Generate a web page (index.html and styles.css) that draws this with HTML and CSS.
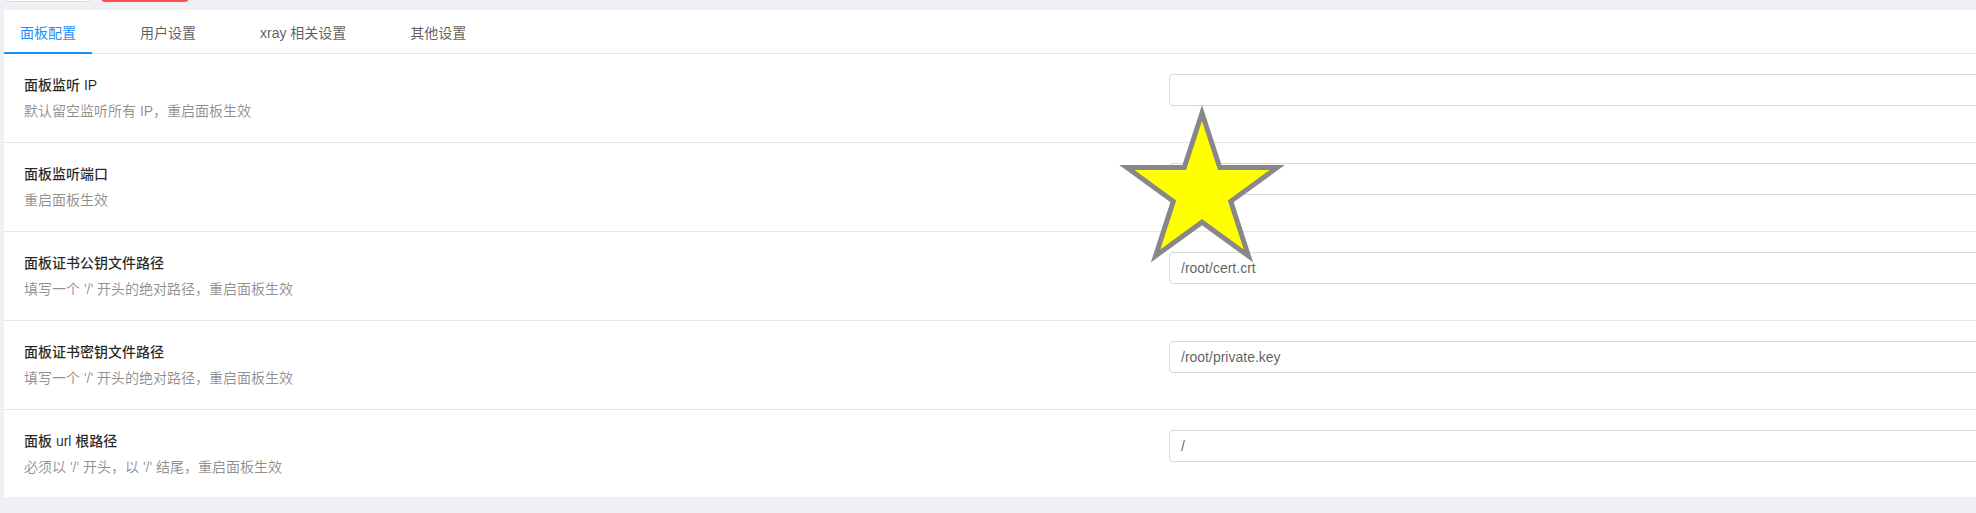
FILE: index.html
```html
<!DOCTYPE html>
<html lang="zh-CN">
<head>
<meta charset="utf-8">
<title>面板设置</title>
<link rel="stylesheet" href="styles.css">
</head>
<body>
<div class="page">
  <div class="toolbar">
    <button class="btn btn-default" aria-label="保存配置"></button>
    <button class="btn btn-danger" aria-label="重启面板"></button>
  </div>
  <div class="card">
    <div class="tabs">
      <div class="tab active">面板配置</div>
      <div class="tab">用户设置</div>
      <div class="tab">xray 相关设置</div>
      <div class="tab">其他设置</div>
    </div>
    <div class="list">
      <div class="item">
        <div class="meta">
          <div class="title">面板监听 IP</div>
          <div class="desc">默认留空监听所有 IP，重启面板生效</div>
        </div>
        <div class="field"><div class="input"></div></div>
      </div>
      <div class="item">
        <div class="meta">
          <div class="title">面板监听端口</div>
          <div class="desc">重启面板生效</div>
        </div>
        <div class="field"><div class="input"></div></div>
      </div>
      <div class="item">
        <div class="meta">
          <div class="title">面板证书公钥文件路径</div>
          <div class="desc">填写一个 '/' 开头的绝对路径，重启面板生效</div>
        </div>
        <div class="field"><div class="input">/root/cert.crt</div></div>
      </div>
      <div class="item">
        <div class="meta">
          <div class="title">面板证书密钥文件路径</div>
          <div class="desc">填写一个 '/' 开头的绝对路径，重启面板生效</div>
        </div>
        <div class="field"><div class="input">/root/private.key</div></div>
      </div>
      <div class="item">
        <div class="meta">
          <div class="title">面板 url 根路径</div>
          <div class="desc">必须以 '/' 开头，以 '/' 结尾，重启面板生效</div>
        </div>
        <div class="field"><div class="input">/</div></div>
      </div>
    </div>
  </div>
  <svg class="star" width="200" height="200" viewBox="-100 -100 200 200" aria-hidden="true">
    <polygon points="0,-79 17.75,-24.43 75.13,-24.41 28.72,9.33 46.44,63.91 0,30.2 -46.44,63.91 -28.72,9.33 -75.13,-24.41 -17.75,-24.43" />
  </svg>
</div>
</body>
</html>
```

FILE: styles.css
```css
html, body {
  margin: 0;
  padding: 0;
  overflow: hidden;
}
body {
  background: #eff0f4;
  font-family: "Liberation Sans", "Noto Sans CJK SC", sans-serif;
  font-size: 14px;
  color: rgba(0, 0, 0, 0.65);
}
.page {
  position: relative;
  display: flow-root;
  padding: 0 0 0 4px;
  height: 513px;
}
.toolbar {
  display: flex;
  gap: 10px;
  margin-top: -30px;
  padding-left: 1px;
  height: 32px;
}
.btn {
  height: 32px;
  border-radius: 4px;
  padding: 0;
}
.btn-default {
  width: 86px;
  background: #fff;
  border: 1px solid #d9d9d9;
}
.btn-danger {
  width: 88px;
  background: #ff4d4f;
  border: 1px solid #ff4d4f;
}
.card {
  margin-top: 8px;
  width: 2330px;
  background: #fff;
}
.tabs {
  display: flex;
  border-bottom: 1px solid #e8e8e8;
  height: 43px;
}
.tab {
  position: relative;
  padding: 12px 16px 9px;
  margin-right: 32px;
  line-height: 22px;
  color: rgba(0, 0, 0, 0.65);
  font-size: 14px;
}
.tab.active {
  color: #1890ff;
}
.tab.active::after {
  content: "";
  position: absolute;
  left: 0;
  right: 0;
  bottom: -1px;
  height: 2px;
  background: #1890ff;
}
.item {
  display: grid;
  grid-template-columns: 1fr 1fr;
  align-items: start;
  padding: 20px;
  border-bottom: 1px solid #e8e8e8;
}
.item:last-child {
  border-bottom: none;
  padding-bottom: 19px;
}
.title {
  line-height: 22px;
  margin-bottom: 4px;
  color: rgba(0, 0, 0, 0.85);
  font-weight: 500;
}
.desc {
  line-height: 22px;
  color: rgba(0, 0, 0, 0.45);
}
.input {
  box-sizing: border-box;
  height: 32px;
  padding: 4px 11px;
  line-height: 22px;
  border: 1px solid #d9d9d9;
  border-radius: 4px;
  color: rgba(0, 0, 0, 0.65);
  background: #fff;
}
.star {
  position: absolute;
  left: 1102px;
  top: 92px;
}
.star polygon {
  fill: #ffff00;
  stroke: #888888;
  stroke-width: 5;
  stroke-linejoin: miter;
  stroke-miterlimit: 10;
}
```
